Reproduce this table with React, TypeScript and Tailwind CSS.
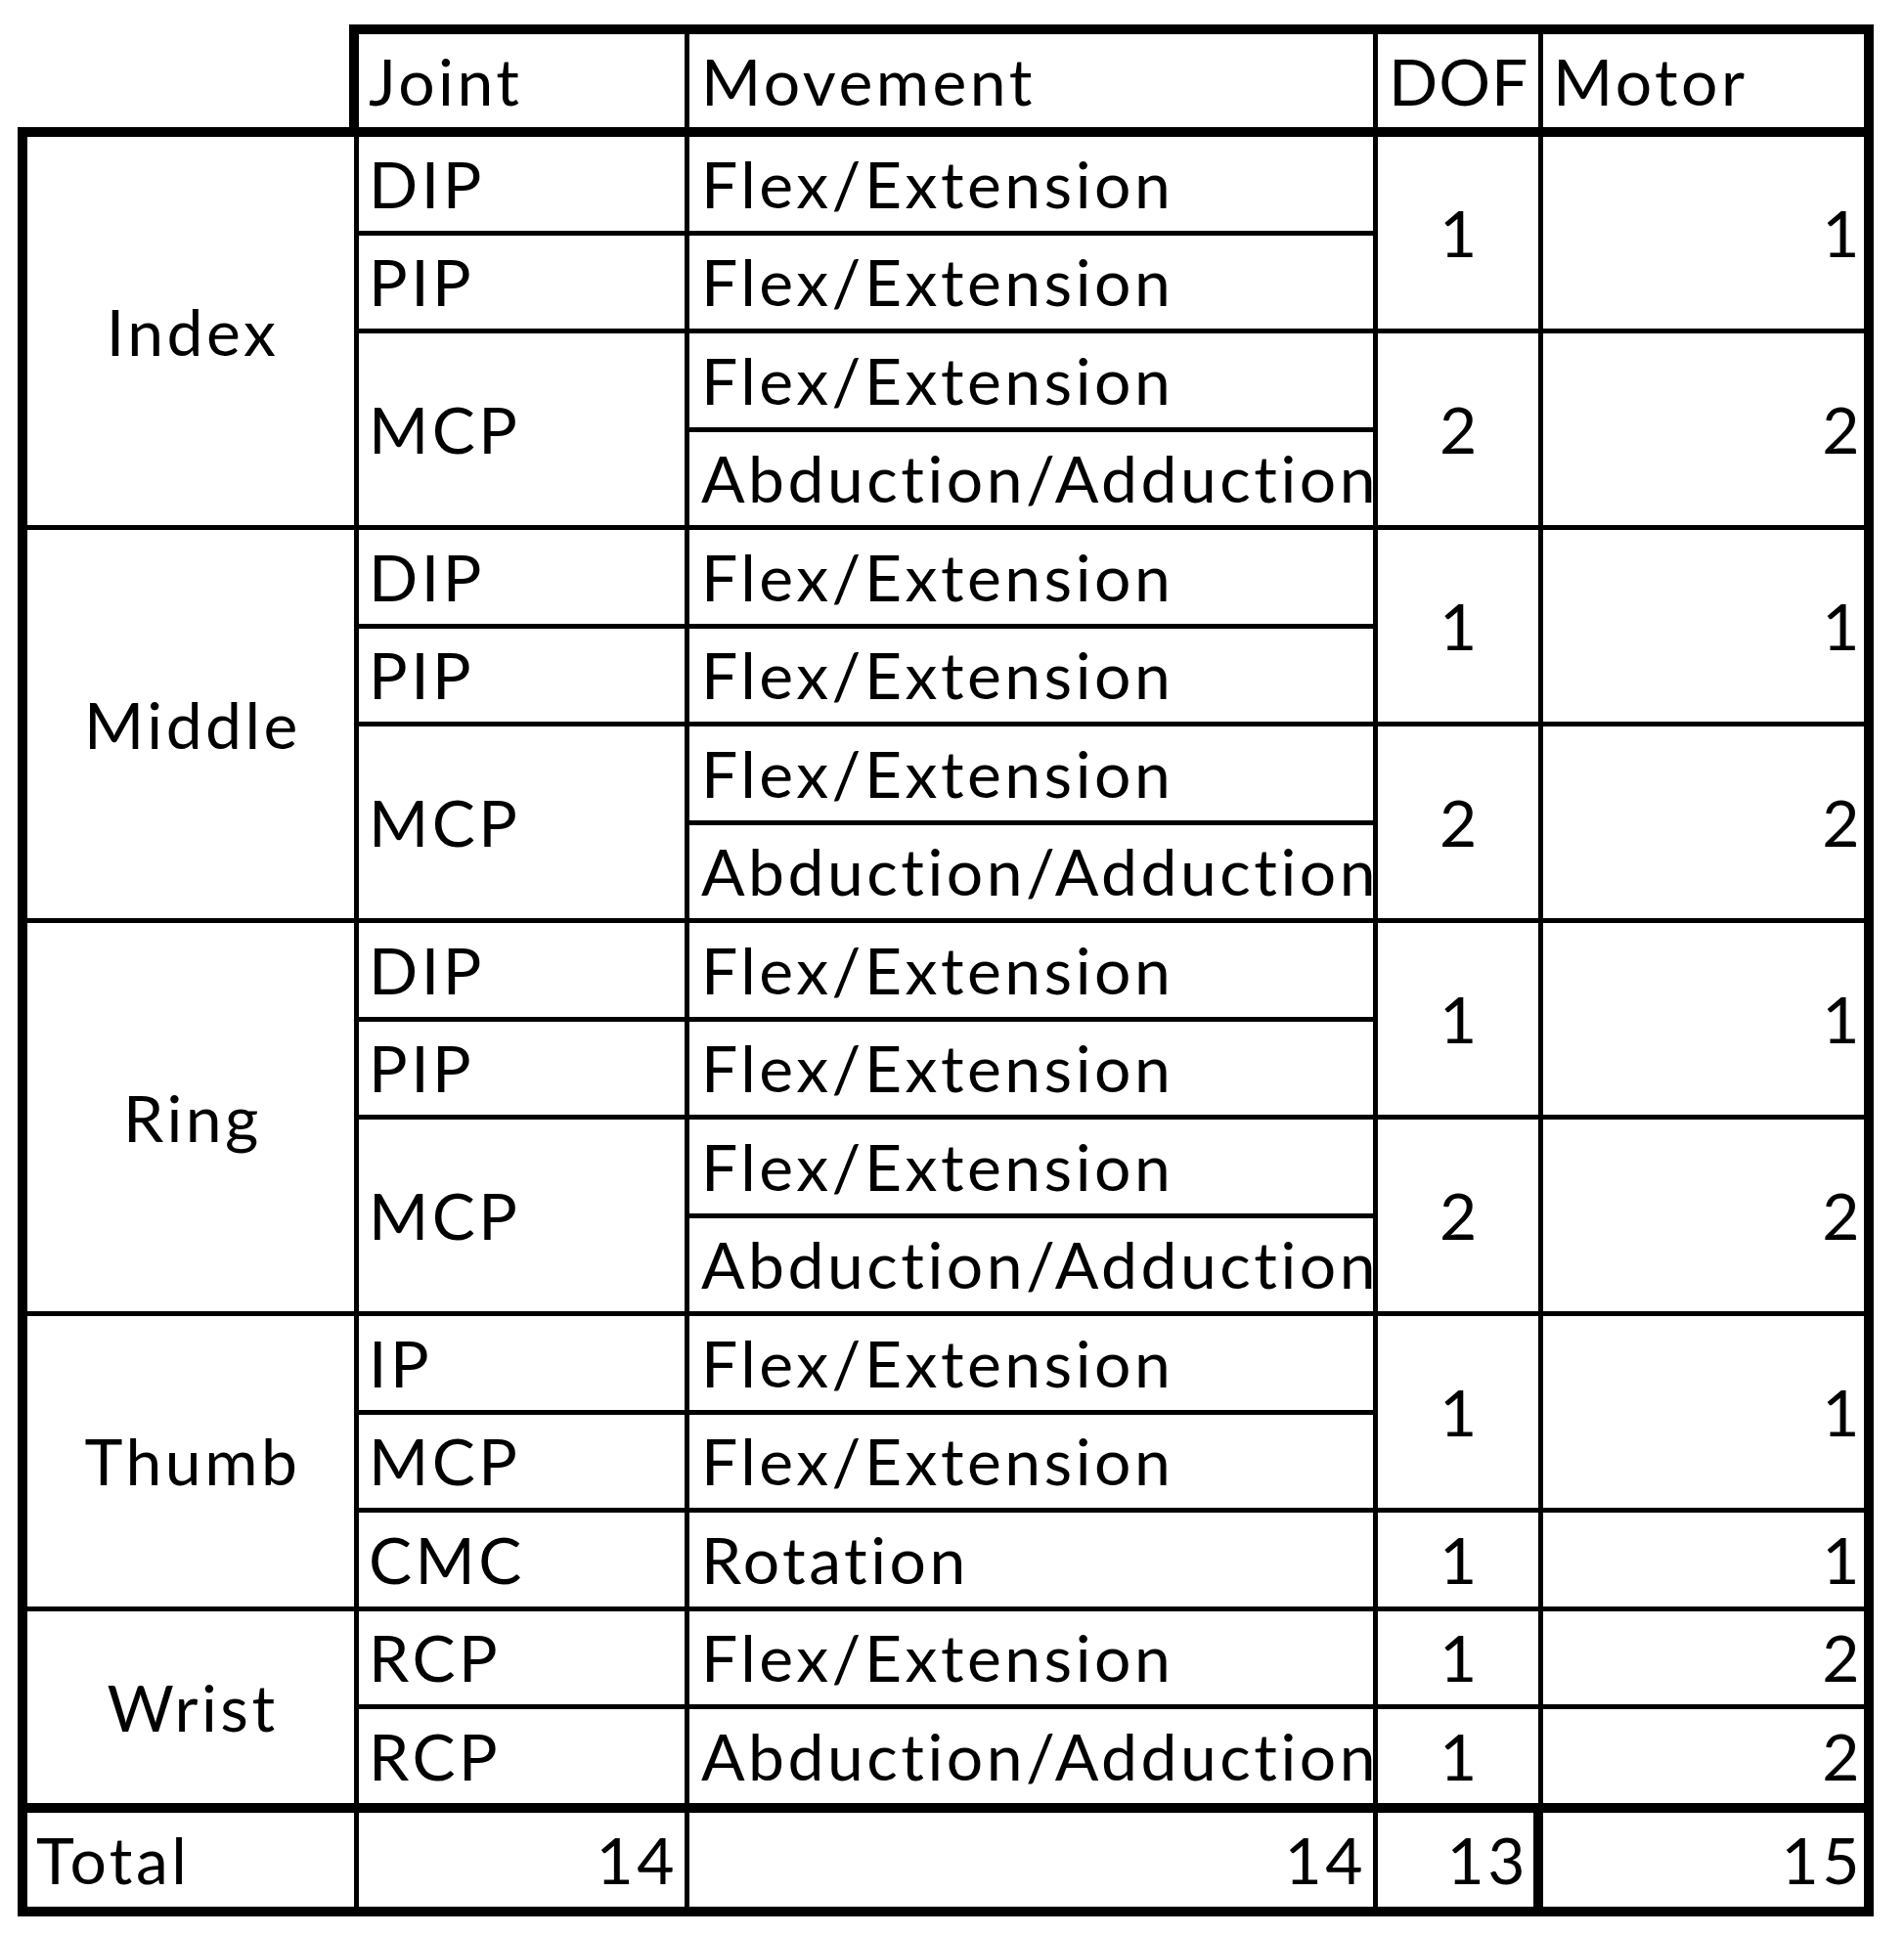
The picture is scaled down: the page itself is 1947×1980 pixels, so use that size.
import { Fragment } from 'react'

const span: Record<number, string> = {
  1: '',
  2: 'row-span-2',
  3: 'row-span-3',
  4: 'row-span-4',
}

type Cell = [string, number]

type Row = {
  finger?: Cell
  joint?: Cell
  move: string
  dof?: Cell
  motor?: Cell
}

const finger = (name: string): Row[] => [
  { finger: [name, 4], joint: ['DIP', 1], move: 'Flex/Extension', dof: ['1', 2], motor: ['1', 2] },
  { joint: ['PIP', 1], move: 'Flex/Extension' },
  { joint: ['MCP', 2], move: 'Flex/Extension', dof: ['2', 2], motor: ['2', 2] },
  { move: 'Abduction/Adduction' },
]

const rows: Row[] = [
  ...finger('Index'),
  ...finger('Middle'),
  ...finger('Ring'),
  { finger: ['Thumb', 3], joint: ['IP', 1], move: 'Flex/Extension', dof: ['1', 2], motor: ['1', 2] },
  { joint: ['MCP', 1], move: 'Flex/Extension' },
  { joint: ['CMC', 1], move: 'Rotation', dof: ['1', 1], motor: ['1', 1] },
  { finger: ['Wrist', 2], joint: ['RCP', 1], move: 'Flex/Extension', dof: ['1', 1], motor: ['2', 1] },
  { joint: ['RCP', 1], move: 'Abduction/Adduction', dof: ['1', 1], motor: ['2', 1] },
]

const base = 'bg-white flex items-center overflow-hidden whitespace-nowrap leading-none'

export default function App() {
  return (
    <div className="min-h-screen bg-white pl-[18px] pt-[25px] text-black font-['Lato',sans-serif] text-[66px] tracking-[3.5px] [font-variant-ligatures:none]">
      {/* header */}
      <div className="ml-[339px] w-[1559px] border-[10px] border-b-0 border-black bg-black">
        <div className="grid grid-cols-[333px_699px_164px_328px] gap-x-[5px] h-[95px]">
          <div className={`${base} pl-[10px]`}>Joint</div>
          <div className={`${base} pl-[12px]`}>Movement</div>
          <div className={`${base} pl-[11px] tracking-[1px]`}>DOF</div>
          <div className={`${base} pl-[10px]`}>Motor</div>
        </div>
      </div>

      {/* body */}
      <div className="w-[1898px] border-[10px] border-black bg-black grid grid-cols-[334px_333px_699px_164px_328px] grid-rows-[repeat(17,95.5px)_101px] gap-[5px]">
        {rows.map((r, i) => (
          <Fragment key={i}>
            {r.finger && (
              <div className={`${base} justify-center pl-[4px] ${span[r.finger[1]]}`}>{r.finger[0]}</div>
            )}
            {r.joint && (
              <div className={`${base} pl-[10px] ${span[r.joint[1]]}`}>{r.joint[0]}</div>
            )}
            <div className={`${base} pl-[12px]`}>{r.move}</div>
            {r.dof && (
              <div className={`${base} justify-center pl-[4px] ${span[r.dof[1]]}`}>{r.dof[0]}</div>
            )}
            {r.motor && (
              <div className={`${base} justify-end pr-[1px] ${span[r.motor[1]]}`}>{r.motor[0]}</div>
            )}
          </Fragment>
        ))}

        {/* total row */}
        <div className={`${base} mt-[5px] pl-[9px]`}>Total</div>
        <div className={`${base} mt-[5px] justify-end pr-[7px]`}>14</div>
        <div className={`${base} mt-[5px] justify-end pr-[7px]`}>14</div>
        <div className={`${base} mt-[5px] mr-[5px] justify-end pr-[5px]`}>13</div>
        <div className={`${base} mt-[5px] justify-end pr-[1px]`}>15</div>
      </div>
    </div>
  )
}
